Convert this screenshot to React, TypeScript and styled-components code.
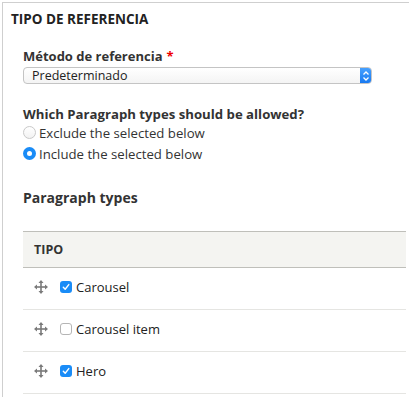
import React from "react";
import styled, { createGlobalStyle } from "styled-components";

const Global = createGlobalStyle`
  html, body { margin: 0; padding: 0; background: #fff; }
  body { font-family: "Open Sans", "DejaVu Sans", sans-serif; color: #222; }
`;

const Fieldset = styled.section`
  margin: 2px 0 0 2px;
  border-top: 1px solid #cfcfcf;
  border-left: 1px solid #cfcfcf;
  padding: 8px 0 0 0;
  height: 395px;
  box-sizing: border-box;
`;

const Legend = styled.div`
  font-weight: 700;
  font-size: 13.5px;
  padding-left: 8px;
  line-height: 16px;
  color: #222;
`;

const Body = styled.div`
  padding: 21px 3px 0 20px;
  display: flex;
  flex-direction: column;
`;

const Label = styled.div<{ $size?: number }>`
  font-weight: 700;
  font-size: ${(p) => p.$size ?? 13}px;
  line-height: 16px;
  color: #333;
  white-space: nowrap;
`;

const Req = styled.span`
  color: #e00;
  margin-left: 4px;
`;

const Select = styled.div`
  margin-top: 3px;
  width: 349px;
  height: 17px;
  box-sizing: border-box;
  border: 1px solid #c4c4c4;
  border-radius: 4px;
  background: linear-gradient(#fff, #f4f4f4);
  display: flex;
  align-items: center;
  font-size: 12.5px;
  color: #222;
  padding-left: 8px;
  overflow: hidden;
`;

const SelectText = styled.span`
  flex: 1;
`;

const SelectArrow = styled.span`
  width: 12px;
  height: 17px;
  margin-right: -1px;
  background: linear-gradient(#4aa3ff, #1577f0);
  border-radius: 0 4px 4px 0;
  display: flex;
  align-items: center;
  justify-content: center;
`;

const Group = styled.div<{ $mt: number }>`
  margin-top: ${(p) => p.$mt}px;
`;

const RadioRow = styled.label`
  display: flex;
  align-items: center;
  gap: 3px;
  height: 21px;
  font-size: 13.2px;
  color: #333;
`;

const Radio = styled.span<{ $on?: boolean }>`
  width: 13px;
  height: 13px;
  border-radius: 50%;
  box-sizing: border-box;
  border: ${(p) => (p.$on ? "none" : "1px solid #c9c9c9")};
  background: ${(p) => (p.$on ? "#1a8cf7" : "linear-gradient(#fff,#f2f2f2)")};
  display: flex;
  align-items: center;
  justify-content: center;
  &::after {
    content: "";
    display: ${(p) => (p.$on ? "block" : "none")};
    width: 5px;
    height: 5px;
    border-radius: 50%;
    background: #fff;
  }
`;

const SubHeading = styled.div`
  font-weight: 700;
  font-size: 14px;
  line-height: 18px;
  color: #333;
  margin-top: 25px;
`;

const Table = styled.div`
  margin-top: 24px;
  width: 383px;
  display: flex;
  flex-direction: column;
`;

const Head = styled.div`
  height: 37px;
  box-sizing: border-box;
  border-top: 1px solid #bfbfba;
  border-bottom: 1px solid #bfbfba;
  background: #f4f4f1;
  display: flex;
  align-items: center;
  padding-left: 11px;
  font-weight: 700;
  font-size: 12.5px;
  color: #333;
`;

const Row = styled.div`
  height: 42px;
  box-sizing: border-box;
  border-bottom: 1px solid #e5e5e2;
  display: flex;
  align-items: center;
  padding: 0 0 4px 11px;
  font-size: 13px;
  color: #222;
`;

const Drag = styled.span`
  width: 14px;
  height: 14px;
  display: flex;
  margin-right: 12px;
`;

const Check = styled.span<{ $on?: boolean }>`
  width: 12px;
  height: 12px;
  box-sizing: border-box;
  border-radius: 3px;
  border: ${(p) => (p.$on ? "none" : "1px solid #b5b5b5")};
  background: ${(p) => (p.$on ? "#1a8cf7" : "#fff")};
  display: flex;
  align-items: center;
  justify-content: center;
  margin-right: 4px;
`;

const DragIcon = () => (
  <svg width="14" height="14" viewBox="0 0 14 14">
    <g fill="#7a7a7a">
      <rect x="6.2" y="2" width="1.6" height="10" />
      <rect x="2" y="6.2" width="10" height="1.6" />
      <polygon points="7,0 4.5,3 9.5,3" />
      <polygon points="7,14 4.5,11 9.5,11" />
      <polygon points="0,7 3,4.5 3,9.5" />
      <polygon points="14,7 11,4.5 11,9.5" />
    </g>
  </svg>
);

const Tick = () => (
  <svg width="10" height="10" viewBox="0 0 10 10">
    <path d="M2.3 5.2 L4.2 7.2 L7.8 2.6" fill="none" stroke="#fff" strokeWidth="1.4" strokeLinecap="round" strokeLinejoin="round" />
  </svg>
);

const Chevrons = () => (
  <svg width="8" height="12" viewBox="0 0 8 12">
    <path d="M1.5 4.5 L4 2 L6.5 4.5 M1.5 7.5 L4 10 L6.5 7.5" fill="none" stroke="#fff" strokeWidth="1.3" />
  </svg>
);

const items = [
  { name: "Carousel", on: true },
  { name: "Carousel item", on: false },
  { name: "Hero", on: true },
];

export default function App() {
  return (
    <>
      <Global />
      <Fieldset>
        <Legend>TIPO DE REFERENCIA</Legend>
        <Body>
          <Label>
            Método de referencia<Req>*</Req>
          </Label>
          <Select>
            <SelectText>Predeterminado</SelectText>
            <SelectArrow>
              <Chevrons />
            </SelectArrow>
          </Select>
          <Group $mt={22}>
            <Label $size={13.2}>Which Paragraph types should be allowed?</Label>
            <RadioRow>
              <Radio />
              Exclude the selected below
            </RadioRow>
            <RadioRow>
              <Radio $on />
              Include the selected below
            </RadioRow>
          </Group>
          <SubHeading>Paragraph types</SubHeading>
          <Table>
            <Head>TIPO</Head>
            {items.map((it) => (
              <Row key={it.name}>
                <Drag>
                  <DragIcon />
                </Drag>
                <Check $on={it.on}>{it.on && <Tick />}</Check>
                {it.name}
              </Row>
            ))}
          </Table>
        </Body>
      </Fieldset>
    </>
  );
}
